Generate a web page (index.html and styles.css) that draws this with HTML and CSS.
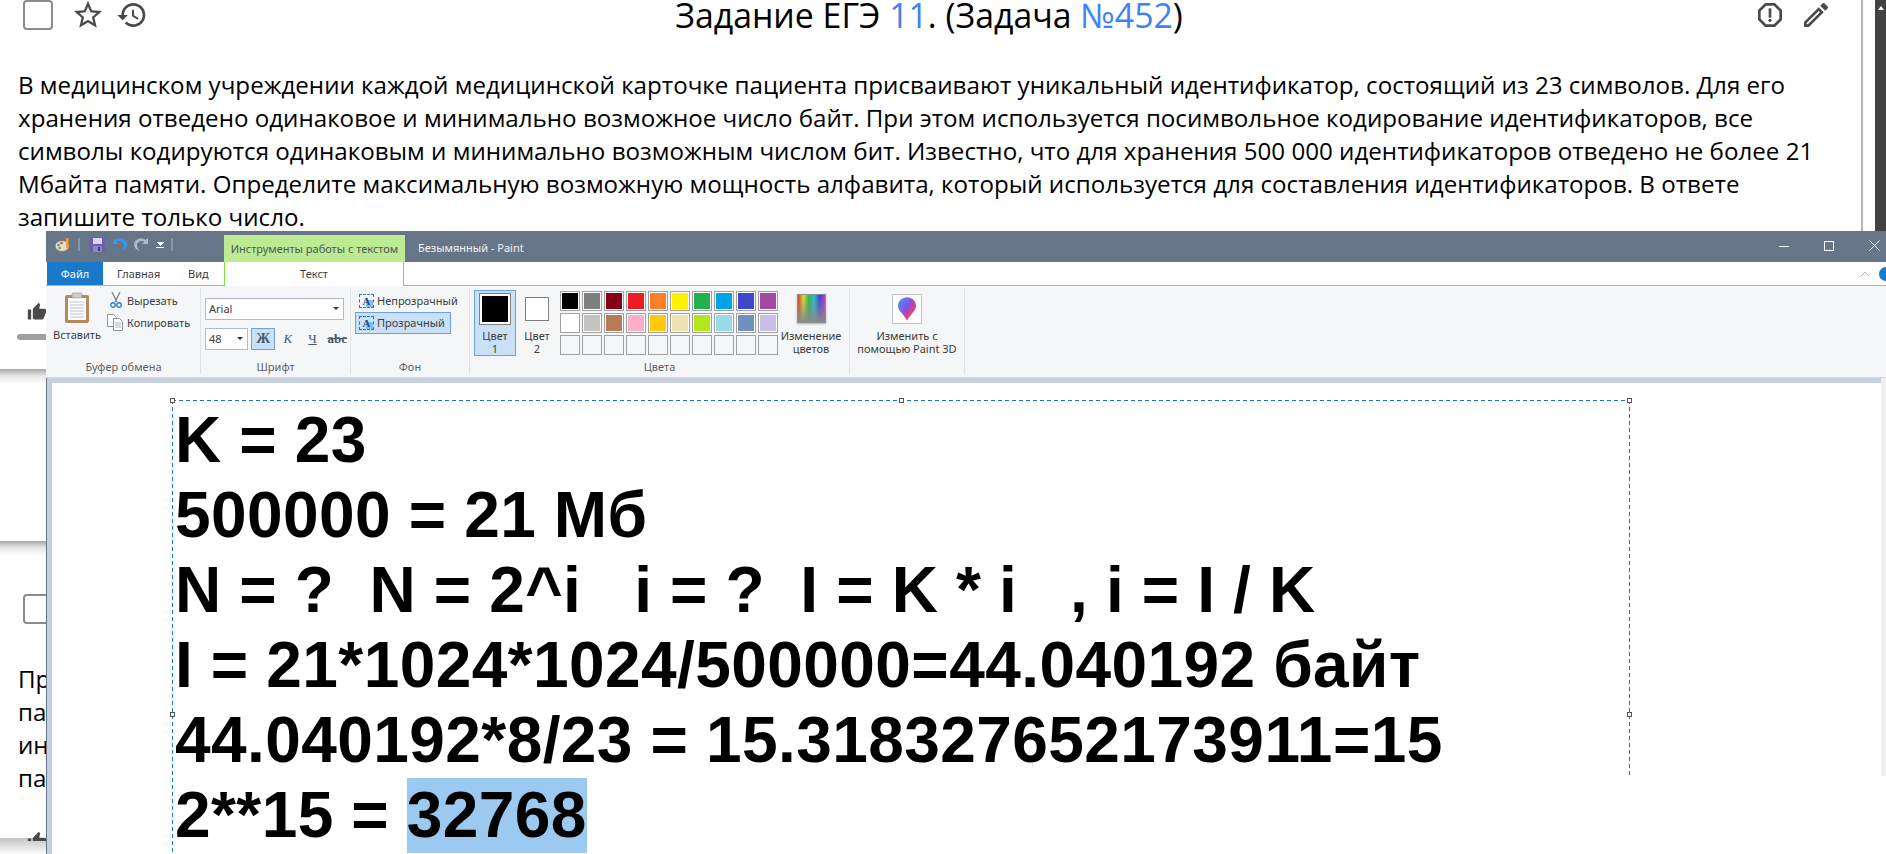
FILE: index.html
```html
<!DOCTYPE html>
<html lang="ru">
<head>
  <meta charset="UTF-8" />
  <meta name="viewport" content="width=device-width, initial-scale=1.0" />
  <title>Задание ЕГЭ 11</title>
  <link rel="stylesheet" href="styles.css">
</head>
<body>
  <main class="page">
    <!-- First task card -->
    <section class="card card-first">
      <div class="card-head">
        <div class="head-left">
          <span class="checkbox"></span>
          <svg class="icon icon-star" viewBox="0 0 24 24"><path d="M22 9.24l-7.19-.62L12 2 9.19 8.63 2 9.24l5.46 4.73L5.82 21 12 17.27 18.18 21l-1.63-7.03L22 9.24zM12 15.4l-3.76 2.27 1-4.28-3.32-2.88 4.38-.38L12 6.1l1.71 4.04 4.38.38-3.32 2.88 1 4.28L12 15.4z"/></svg>
          <svg class="icon icon-history" viewBox="0 0 24 24"><path d="M13 3c-4.97 0-9 4.03-9 9H1l3.89 3.89.07.14L9 12H6c0-3.87 3.13-7 7-7s7 3.13 7 7-3.13 7-7 7c-1.93 0-3.68-.79-4.94-2.06l-1.42 1.42C8.27 19.99 10.51 21 13 21c4.97 0 9-4.03 9-9s-4.03-9-9-9zm-1 5v5l4.28 2.54.72-1.21-3.5-2.08V8H12z"/></svg>
        </div>
        <h1 class="task-title">Задание ЕГЭ <a href="#">11</a>. (Задача <a href="#">№452</a>)</h1>
        <div class="head-right">
          <svg class="icon icon-report" viewBox="0 0 24 24"><path d="M15.73 3H8.27L3 8.27v7.46L8.27 21h7.46L21 15.73V8.27L15.73 3zM19 14.9L14.9 19H9.1L5 14.9V9.1L9.1 5h5.8L19 9.1v5.8z"/><circle cx="12" cy="16" r="1.2"/><rect x="11" y="7" width="2" height="7"/></svg>
          <svg class="icon icon-edit" viewBox="0 0 24 24"><path d="M14.06 9.02l.92.92L5.92 19H5v-.92l9.06-9.06M17.66 3c-.25 0-.51.1-.7.29l-1.83 1.83 3.75 3.75 1.83-1.83c.39-.39.39-1.02 0-1.41l-2.34-2.34c-.2-.2-.45-.29-.71-.29zm-3.6 3.19L3 17.25V21h3.75L17.81 9.94l-3.75-3.75z"/></svg>
        </div>
      </div>
      <p class="task-text">В медицинском учреждении каждой медицинской карточке пациента присваивают уникальный идентификатор, состоящий из 23 символов. Для его<br>хранения отведено одинаковое и минимально возможное число байт. При этом используется посимвольное кодирование идентификаторов, все<br>символы кодируются одинаковым и минимально возможным числом бит. Известно, что для хранения 500 000 идентификаторов отведено не более 21<br>Мбайта памяти. Определите максимальную возможную мощность алфавита, который используется для составления идентификаторов. В ответе<br>запишите только число.</p>
      <div class="rating">
        <svg class="icon icon-thumb" viewBox="0 0 24 24"><path d="M1 21h4V9H1v12zm22-11c0-1.1-.9-2-2-2h-6.31l.95-4.57.03-.32c0-.41-.17-.79-.44-1.06L14.17 1 7.59 7.59C7.22 7.95 7 8.45 7 9v10c0 1.1.9 2 2 2h9c.83 0 1.54-.5 1.84-1.22l3.02-7.05c.09-.23.14-.47.14-.73v-2z"/></svg>
        <div class="rating-bar"></div>
      </div>
    </section>
    <div class="card-gap"></div>
    <section class="card card-second"></section>
    <div class="card-gap"></div>
    <!-- Second task, mostly covered by the Paint window -->
    <section class="card card-third">
      <span class="checkbox"></span>
      <p class="task-text task-text-cut">При<br>пам<br>инд<br>пам</p>
      <svg class="icon icon-thumb icon-thumb-low" viewBox="0 0 24 24"><path d="M1 21h4V9H1v12zm22-11c0-1.1-.9-2-2-2h-6.31l.95-4.57.03-.32c0-.41-.17-.79-.44-1.06L14.17 1 7.59 7.59C7.22 7.95 7 8.45 7 9v10c0 1.1.9 2 2 2h9c.83 0 1.54-.5 1.84-1.22l3.02-7.05c.09-.23.14-.47.14-.73v-2z"/></svg>
    </section>
    <div class="card-gap card-gap-last"></div>
  </main>

  <div class="page-scrollbar"><span class="scroll-arrow"></span></div>

  <!-- Paint window lying over the page -->
  <div class="paint">
    <div class="titlebar">
      <div class="qat">
        <svg class="qat-paint" viewBox="0 0 16 14">
          <ellipse cx="7" cy="8" rx="7" ry="5.5" fill="#e8dcc8" stroke="#8a7a66"/>
          <circle cx="3.5" cy="7" r="1.3" fill="#3f8fdc"/><circle cx="6.5" cy="5" r="1.3" fill="#e8483a"/><circle cx="4.5" cy="10" r="1.3" fill="#49b04c"/>
          <rect x="11" y="0" width="2.5" height="10" fill="#f0a030"/>
        </svg>
        <span class="qat-sep"></span>
        <svg class="qat-save" viewBox="0 0 15 15">
          <rect width="15" height="15" rx="1" fill="#6a5fb0"/><rect x="3" y="1" width="9" height="6" fill="#d9d6ee"/><rect x="3" y="9" width="9" height="6" fill="#8d86c6"/><rect x="8" y="10" width="2" height="4" fill="#3f3880"/>
        </svg>
        <svg class="qat-undo" viewBox="0 0 15 15"><path d="M1 1v6h6L4.6 4.8C7.5 3 12 4.600 12 8.500c0 2-1 3.800-3 5.500 4-1 6-3.500 6-6.500C15 2.500 8.500-.5 3.300 2.800z" fill="#2f9be8"/></svg>
        <svg class="qat-redo" viewBox="0 0 15 15"><path d="M14 1v6H8l2.400-2.200C7.500 3 3 4.600 3 8.500c0 2 1 3.800 3 5.500-4-1-6-3.500-6-6.500C0 2.500 6.500-.5 11.700 2.800z" fill="#a6bccf"/></svg>
        <span class="qat-more"></span>
        <span class="qat-sep"></span>
      </div>
      <div class="context-label">Инструменты работы с текстом</div>
      <div class="doc-title">Безымянный - Paint</div>
      <div class="win-controls">
        <span class="win-min"></span>
        <span class="win-max"></span>
        <svg class="win-close" viewBox="0 0 11 11"><path d="M.5.5l10 10M10.500.5l-10 10" stroke="#fff" fill="none"/></svg>
      </div>
    </div>

    <div class="tabs">
      <div class="tab tab-file">Файл</div>
      <div class="tab tab-home">Главная</div>
      <div class="tab tab-view">Вид</div>
      <div class="tab tab-text">Текст</div>
      <div class="tabs-right">
        <svg class="collapse" viewBox="0 0 10 6"><path d="M.5 5.500L5 1l4.500 4.500" stroke="#b5bac0" fill="none"/></svg>
        <span class="help"></span>
      </div>
    </div>

    <div class="ribbon">
      <div class="group group-clipboard">
        <div class="group-body">
          <div class="paste">
            <svg class="paste-icon" viewBox="0 0 24 31">
              <rect x="0" y="3" width="24" height="28" rx="2" fill="#b5895a"/>
              <rect x="3" y="6" width="18" height="22" fill="#fdfdfd"/>
              <path d="M5 10h14M5 13h14M5 16h14M5 19h14M5 22h14M5 25h14" stroke="#b9c6d6"/>
              <rect x="7" y="1" width="10" height="5" rx="1" fill="#c9ccd0" stroke="#8f949a" stroke-width=".6"/>
            </svg>
            <span>Вставить</span>
          </div>
          <div class="clip-actions">
            <div class="clip-row">
              <svg class="cut-icon" viewBox="0 0 12 16"><path d="M2 0l5 10M10 0L5 10" stroke="#7f8a96" stroke-width="1.400" fill="none"/><circle cx="3" cy="13" r="2.200" fill="none" stroke="#2a86d8" stroke-width="1.400"/><circle cx="9" cy="13" r="2.200" fill="none" stroke="#2a86d8" stroke-width="1.400"/></svg>
              <span>Вырезать</span>
            </div>
            <div class="clip-row">
              <svg class="copy-icon" viewBox="0 0 16 17"><path d="M.5.5h6l3 3v9h-9z" fill="#fff" stroke="#8f949a"/><path d="M6.500 4.500h6l3 3v9h-9z" fill="#fff" stroke="#8f949a"/><path d="M8 9h6M8 11h6M8 13h6" stroke="#b0b6bc"/></svg>
              <span>Копировать</span>
            </div>
          </div>
        </div>
        <div class="group-label">Буфер обмена</div>
      </div>

      <div class="group group-font">
        <div class="group-body font-body">
          <div class="combo combo-font"><span>Arial</span><i class="combo-arrow"></i></div>
          <div class="font-row">
            <div class="combo combo-size"><span>48</span><i class="combo-arrow"></i></div>
            <span class="font-btn font-btn-on">Ж</span>
            <span class="font-btn font-italic">К</span>
            <span class="font-btn font-under">Ч</span>
            <span class="font-btn font-strike">abc</span>
          </div>
        </div>
        <div class="group-label">Шрифт</div>
      </div>

      <div class="group group-bg">
        <div class="group-body bg-body">
          <div class="bg-row"><span class="a-icon">A</span><span>Непрозрачный</span></div>
          <div class="bg-row bg-row-on"><span class="a-icon">A</span><span>Прозрачный</span></div>
        </div>
        <div class="group-label">Фон</div>
      </div>

      <div class="group group-colors">
        <div class="group-body colors-body">
          <div class="color-btn color-btn-on">
            <span class="color-main"><i class="sw-black"></i></span>
            <span>Цвет<br>1</span>
          </div>
          <div class="color-btn">
            <span class="color-second"><i class="sw-white"></i></span>
            <span>Цвет<br>2</span>
          </div>
          <div class="palette">
            <span class="cell"><i class="sw-black"></i></span><span class="cell"><i class="sw-gray"></i></span><span class="cell"><i class="sw-maroon"></i></span><span class="cell"><i class="sw-red"></i></span><span class="cell"><i class="sw-orange"></i></span><span class="cell"><i class="sw-yellow"></i></span><span class="cell"><i class="sw-green"></i></span><span class="cell"><i class="sw-sky"></i></span><span class="cell"><i class="sw-indigo"></i></span><span class="cell"><i class="sw-purple"></i></span>
            <span class="cell"><i class="sw-white"></i></span><span class="cell"><i class="sw-silver"></i></span><span class="cell"><i class="sw-brown"></i></span><span class="cell"><i class="sw-pink"></i></span><span class="cell"><i class="sw-gold"></i></span><span class="cell"><i class="sw-cream"></i></span><span class="cell"><i class="sw-lime"></i></span><span class="cell"><i class="sw-aqua"></i></span><span class="cell"><i class="sw-steel"></i></span><span class="cell"><i class="sw-lilac"></i></span>
            <span class="cell cell-empty"></span><span class="cell cell-empty"></span><span class="cell cell-empty"></span><span class="cell cell-empty"></span><span class="cell cell-empty"></span><span class="cell cell-empty"></span><span class="cell cell-empty"></span><span class="cell cell-empty"></span><span class="cell cell-empty"></span><span class="cell cell-empty"></span>
          </div>
          <div class="edit-colors">
            <span class="rainbow"></span>
            <span>Изменение<br>цветов</span>
          </div>
        </div>
        <div class="group-label">Цвета</div>
      </div>

      <div class="group group-3d">
        <div class="group-body edit-3d">
          <span class="logo-3d">
            <svg viewBox="0 0 20 26">
              <defs><linearGradient id="drop3d" x1="0" y1="0" x2="1" y2="1"><stop offset="0" stop-color="#35a8f0"/><stop offset=".45" stop-color="#8a4fe0"/><stop offset=".75" stop-color="#f0406a"/><stop offset="1" stop-color="#ffb020"/></linearGradient></defs>
              <path d="M10 0c5.500 0 10 4 10 9.500 0 6-6 9-10 16.500C7 19 0 15.500 0 9.500 0 4 4.500 0 10 0z" fill="url(#drop3d)"/>
            </svg>
          </span>
          <span>Изменить с<br>помощью Paint 3D</span>
        </div>
      </div>
    </div>

    <div class="workspace">
      <div class="canvas">
        <div class="selection">
          <i class="handle handle-tl"></i><i class="handle handle-tm"></i><i class="handle handle-tr"></i>
          <i class="handle handle-ml"></i><i class="handle handle-mr"></i>
        </div>
        <div class="drawn-text">
          <div class="drawn-line">K = 23</div>
          <div class="drawn-line">500000 = 21 Мб</div>
          <div class="drawn-line">N = ?  N = 2^i   i = ?  I = K * i   , i = I / K</div>
          <div class="drawn-line">I = 21*1024*1024/500000=44.040192 байт</div>
          <div class="drawn-line">44.040192*8/23 = 15.318327652173911=15</div>
          <div class="drawn-line">2**15 = <span class="picked">32768</span></div>
        </div>
      </div>
      <div class="canvas-scroll"></div>
    </div>
  </div>
</body>
</html>
```

FILE: styles.css
```css
* {
  margin: 0;
  padding: 0;
  box-sizing: border-box;
}
html, body {
  height: 854px;
  overflow: hidden;
}
body {
  position: relative;
  display: flex;
  background: #fff;
  color: #000;
  font-family: "Open Sans", sans-serif;
}
.page {
  width: 1875px;
  height: 854px;
  overflow: hidden;
}
.page-scrollbar {
  width: 11px;
  background: #424242;
}
.scroll-arrow {
  display: block;
  margin: 6px 0 0 3px;
  width: 0;
  border: 3px solid transparent;
  border-top: 0;
  border-bottom: 4px solid #fff;
}
.card {
  width: 1863px;
  border-right: 2px solid #b4b4b4;
}
.card-first { height: 369px; }
.card-second { height: 157px; }
.card-third {
  height: 285px;
  overflow: hidden;
  padding: 38px 0 0 23px;
}
.card-gap {
  height: 15px;
  width: 1863px;
  background: linear-gradient(#a8a8a8, #e6e6e6 45%, #fff);
}
.card-gap-last {
  margin-top: -3px;
  height: 17px;
  background: linear-gradient(#c4c4c4, #fff);
}
.card-head {
  display: flex;
  align-items: center;
  height: 30px;
  padding-left: 23px;
}
.head-left {
  display: flex;
  align-items: center;
  width: 123px;
  flex: none;
}
.checkbox {
  display: block;
  width: 30px;
  height: 30px;
  border: 2px solid #8c8c8c;
  border-radius: 4px;
  flex: none;
}
.icon {
  display: block;
  fill: #4a4a4a;
  flex: none;
}
.icon-star {
  width: 34px;
  height: 34px;
  margin-left: 18px;
}
.icon-history {
  width: 32px;
  height: 32px;
  margin-left: 11px;
}
.task-title {
  flex: 1;
  margin-right: 42px;
  text-align: center;
  font-size: 33.84px;
  font-weight: 400;
  line-height: 30px;
  white-space: nowrap;
}
.task-title a {
  color: #3f82f7;
  text-decoration: none;
}
.head-right {
  display: flex;
  align-items: center;
  gap: 14px;
  width: 107px;
  flex: none;
}
.icon-report {
  width: 32px;
  height: 32px;
}
.icon-edit {
  width: 32px;
  height: 32px;
}
.task-text {
  margin: 38px 0 0 18px;
  font-size: 24.15px;
  line-height: 33px;
  white-space: nowrap;
}
.task-text-cut {
  margin: 38px 0 0 -5px;
}
.rating {
  padding: 69px 0 0 17px;
}
.icon-thumb {
  width: 20px;
  height: 20px;
  margin-left: 10px;
}
.icon-thumb-low {
  position: relative;
  margin: 37px 0 0 4px;
}
.rating-bar {
  width: 60px;
  height: 6px;
  margin-top: 12px;
  border-radius: 3px;
  background: #a0a0a0;
}

/* Paint window */
.paint {
  position: absolute;
  left: 46px;
  top: 231px;
  right: 0;
  bottom: 0;
  display: flex;
  flex-direction: column;
  font-family: "Noto Sans", sans-serif;
  font-size: 11px;
  color: #3c3c3c;
}
.titlebar {
  display: flex;
  height: 31px;
  background: #667587;
}
.qat {
  display: flex;
  align-items: center;
  width: 178px;
  padding: 0 0 4px 9px;
}
.qat-paint {
  width: 16px;
  height: 14px;
}
.qat-sep {
  width: 2px;
  height: 13px;
  margin-left: 7px;
  background: #8a97a6;
}
.qat-save {
  width: 15px;
  height: 15px;
  margin-left: 10px;
}
.qat-undo {
  width: 15px;
  height: 15px;
  margin-left: 7px;
}
.qat-redo {
  width: 15px;
  height: 15px;
  margin-left: 7px;
}
.qat-more {
  width: 8px;
  height: 6px;
  margin-left: 7px;
  border-top: 1px solid #fff;
  background: linear-gradient(to bottom right, transparent 50%, #fff 50%) left 1px / 4px 4px no-repeat,
              linear-gradient(to bottom left, transparent 50%, #fff 50%) right 1px / 4px 4px no-repeat;
  transform: scaleY(-1);
}
.context-label {
  width: 181px;
  margin-top: 4px;
  padding-top: 6px;
  background: #bdeb92;
  text-align: center;
  color: #4a5560;
  white-space: nowrap;
}
.doc-title {
  margin-left: 13px;
  padding-top: 9px;
  color: #f0f2f5;
  white-space: nowrap;
}
.win-controls {
  display: flex;
  align-items: center;
  margin-left: auto;
  padding: 0 6px 2px 0;
}
.win-min {
  width: 10px;
  height: 1px;
  background: #fff;
  margin-top: 2px;
}
.win-max {
  width: 10px;
  height: 10px;
  margin-left: 35px;
  border: 1px solid #fff;
}
.win-close {
  width: 11px;
  height: 11px;
  margin-left: 35px;
}
.tabs {
  display: flex;
  height: 24px;
  background: #fff;
  border-bottom: 1px solid #80e040;
}
.tab {
  height: 23px;
  line-height: 24px;
  white-space: nowrap;
}
.tab-file {
  width: 56px;
  margin-left: 1px;
  background: #1979ca;
  color: #fff;
  text-align: center;
}
.tab-home { margin-left: 14px; width: 71px; }
.tab-view { width: 36px; }
.tab-text {
  width: 180px;
  height: 24px;
  background: #fff;
  border-left: 1px solid #80e040;
  border-right: 1px solid #80e040;
  text-align: center;
}
.tabs-right {
  display: flex;
  align-items: center;
  margin-left: auto;
  height: 23px;
}
.collapse {
  width: 10px;
  height: 6px;
}
.help {
  width: 14px;
  height: 14px;
  margin-left: 9px;
  margin-right: -7px;
  border-radius: 50%;
  background: #1979ca;
}
.ribbon {
  display: flex;
  height: 92px;
  padding: 2px 0 0 1px;
  background: #f5f6f7;
  border-bottom: 1px solid #dadbdc;
}
.group {
  display: flex;
  flex-direction: column;
  height: 86px;
  border-right: 1px solid #e1e3e6;
  text-align: center;
}
.group-body {
  flex: 1;
  display: flex;
}
.group-label {
  height: 14px;
  line-height: 14px;
  color: #5c6068;
}
.group-clipboard { width: 154px; }
.group-font { width: 150px; }
.group-bg { width: 119px; }
.group-colors { width: 380px; }
.group-3d { width: 115px; }
.paste {
  display: flex;
  flex-direction: column;
  align-items: center;
  width: 60px;
  padding-top: 4px;
}
.paste-icon {
  width: 24px;
  height: 31px;
  margin-bottom: 4px;
}
.clip-actions {
  padding-top: 1px;
}
.clip-row {
  display: flex;
  align-items: center;
  height: 22px;
  gap: 4px;
}
.cut-icon {
  width: 12px;
  height: 16px;
  margin-left: 3px;
  margin-right: 1px;
}
.copy-icon {
  width: 16px;
  height: 17px;
}
.font-body {
  flex-direction: column;
  padding: 10px 0 0 4px;
  gap: 8px;
}
.combo {
  display: flex;
  align-items: center;
  justify-content: space-between;
  height: 22px;
  padding: 0 4px 2px 3px;
  background: #fff;
  border: 1px solid #a9bbd6;
}
.combo-font { width: 139px; }
.combo-size { width: 44px; margin-right: 3px; }
.combo-arrow {
  border: 3px solid transparent;
  border-bottom: 0;
  border-top: 3px solid #333;
}
.font-row {
  display: flex;
  align-items: center;
}
.font-btn {
  width: 24px;
  height: 22px;
  margin-right: 1px;
  font-family: "Liberation Serif", serif;
  font-size: 13px;
  line-height: 20px;
  color: #46586e;
  border: 1px solid transparent;
}
.font-btn-on {
  background: #c9e0f7;
  border-color: #6aa3e0;
  font-weight: 700;
  font-size: 14px;
}
.font-italic { font-style: italic; }
.font-under { text-decoration: underline; }
.font-strike {
  font-weight: 700;
  text-decoration: line-through;
}
.bg-body {
  flex-direction: column;
  padding: 2px 0 0 4px;
}
.bg-row {
  display: flex;
  align-items: center;
  width: 112px;
  height: 22px;
  gap: 3px;
  padding: 0 0 1px 3px;
  border: 1px solid transparent;
  white-space: nowrap;
}
.bg-row-on {
  width: 96px;
  background: #c9e0f7;
  border-color: #6aa3e0;
}
.a-icon {
  flex: none;
  width: 15px;
  height: 14px;
  font-family: "Liberation Serif", serif;
  font-weight: 700;
  font-size: 11px;
  line-height: 12px;
  color: #2a4a7a;
  border: 1px dashed #2a70c0;
  background: linear-gradient(#7fc0f5, #7fc0f5) right bottom / 7px 7px no-repeat;
}
.colors-body {
  padding: 0 0 0 4px;
}
.color-btn {
  display: flex;
  flex-direction: column;
  align-items: center;
  justify-content: space-between;
  width: 42px;
  height: 66px;
  margin-top: 2px;
  margin-right: 1px;
  line-height: 13px;
  border: 1px solid transparent;
}
.color-btn-on {
  background: #c9e0f7;
  border-color: #6aa3e0;
  padding-top: 2px;
}
.color-btn:nth-child(2) {
  width: 40px;
  padding-top: 6px;
}
.color-main, .color-second {
  display: block;
  padding: 2px;
  background: #fff;
  border: 1px solid #7f7f7f;
}
.color-main { width: 32px; height: 32px; }
.color-second { width: 24px; height: 24px; }
.color-main i, .color-second i, .cell i {
  display: block;
  width: 100%;
  height: 100%;
}
.palette {
  display: grid;
  grid-template-columns: repeat(10, 20px);
  grid-auto-rows: 20px;
  gap: 2px;
  margin: 3px 0 0 2px;
  align-content: start;
}
.cell {
  display: block;
  padding: 1px;
  background: #fff;
  border: 1px solid #a0a0a0;
}
.cell-empty { background: #f5f6f7; }
.sw-black { background: #000; }
.sw-gray { background: #7f7f7f; }
.sw-maroon { background: #880015; }
.sw-red { background: #ed1c24; }
.sw-orange { background: #ff7f27; }
.sw-yellow { background: #fff200; }
.sw-green { background: #22b14c; }
.sw-sky { background: #00a2e8; }
.sw-indigo { background: #3f48cc; }
.sw-purple { background: #a349a4; }
.sw-white { background: #fff; }
.sw-silver { background: #c3c3c3; }
.sw-brown { background: #b97a57; }
.sw-pink { background: #ffaec9; }
.sw-gold { background: #ffc90e; }
.sw-cream { background: #efe4b0; }
.sw-lime { background: #b5e61d; }
.sw-aqua { background: #99d9ea; }
.sw-steel { background: #7092be; }
.sw-lilac { background: #c8bfe7; }
.edit-colors {
  display: flex;
  flex-direction: column;
  align-items: center;
  width: 66px;
  padding-top: 6px;
  line-height: 13px;
  white-space: nowrap;
}
.rainbow {
  width: 29px;
  height: 29px;
  margin-bottom: 6px;
  border: 1px solid #8f8f8f;
  box-shadow: 0 1px 2px rgba(0, 0, 0, 0.3);
  background: linear-gradient(rgba(128, 128, 128, 0), #8a8a8a),
              linear-gradient(to right, #e03030, #e8e020, #20c040, #20c0e0, #3040e0, #d030c0);
}
.edit-3d {
  flex-direction: column;
  align-items: center;
  padding-top: 6px;
  line-height: 13px;
  white-space: nowrap;
}
.logo-3d {
  display: flex;
  align-items: center;
  justify-content: center;
  width: 30px;
  height: 30px;
  margin-bottom: 5px;
  background: #fff;
  border: 1px solid #c4c4c4;
}
.logo-3d svg {
  width: 18px;
  height: 24px;
}
.workspace {
  flex: 1;
  display: flex;
  background: #fff;
  border-left: 1px solid #667587;
}
.canvas {
  position: relative;
  flex: 1;
  overflow: hidden;
  background: #fff;
  border-left: 5px solid #c5cfe0;
  border-top: 5px solid #c5cfe0;
}
.canvas-scroll {
  width: 5px;
  height: 398px;
  background: #f0f0f0;
}
/* selection frame, dashes drawn with gradients to get the Paint rhythm */
.selection {
  position: absolute;
  left: 120px;
  top: 17px;
  width: 1458px;
  height: 454px;
  background:
    repeating-linear-gradient(to right, #1677d2 0 4px, transparent 4px 7px) left top / 100% 1px no-repeat,
    repeating-linear-gradient(to bottom, #1677d2 0 4px, transparent 4px 7px) left top / 1px 100% no-repeat,
    repeating-linear-gradient(to bottom, #1677d2 0 4px, transparent 4px 7px) right top / 1px 375px no-repeat;
}
.handle {
  position: absolute;
  width: 5px;
  height: 5px;
  background: #fff;
  border: 1px solid #555;
}
.handle-tl { left: -2px; top: -2px; }
.handle-tm { left: 727px; top: -2px; }
.handle-tr { right: -2px; top: -2px; }
.handle-ml { left: -2px; top: 312px; }
.handle-mr { right: -2px; top: 312px; }
.drawn-text {
  position: absolute;
  left: 123px;
  top: 20px;
  font-family: "Liberation Sans", Arial, sans-serif;
  font-weight: 700;
  font-size: 64px;
  line-height: 75px;
  letter-spacing: 0.42px;
  word-spacing: -0.55px;
  color: #000;
}
.drawn-line {
  white-space: pre;
}
.picked {
  display: inline-block;
  height: 75px;
  background: #9bc9ef;
}
```
